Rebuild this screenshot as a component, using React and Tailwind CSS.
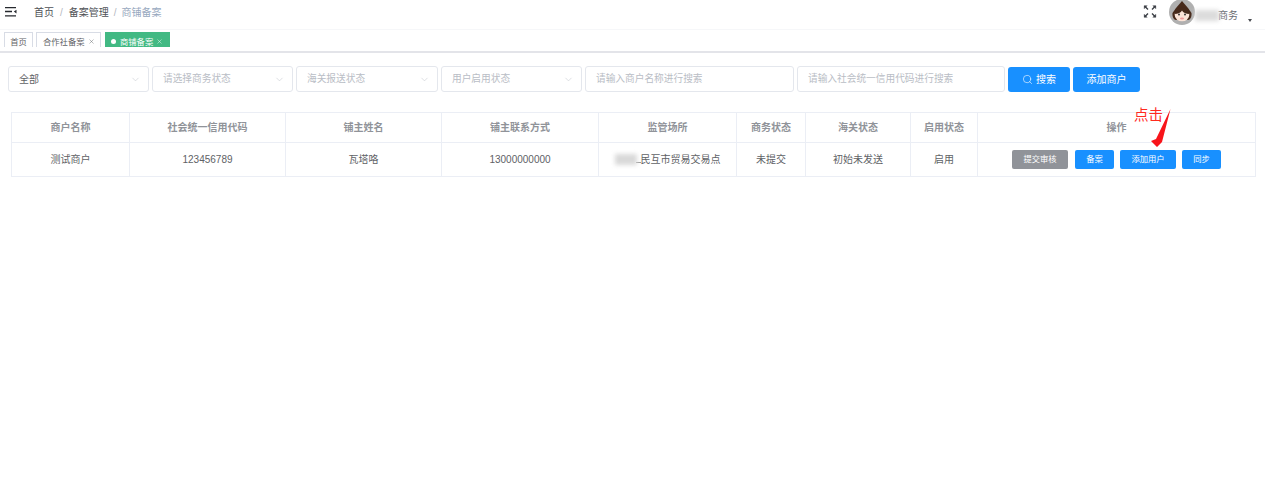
import React from "react";
import { ChevronDown, Search, X } from "lucide-react";

const font = { fontFamily: '"Liberation Sans","Noto Sans CJK SC",sans-serif' };

function Sel({ w, text, ph }) {
  return (
    <div className={`${w} h-[26px] shrink-0 flex items-center justify-between pl-[10px] pr-[7px] rounded-[3px] border border-[#e4e7ed] bg-white`}>
      <span className={ph ? "text-[#b9bdc5] text-[9.7px]" : "text-[#5f6266] text-[10px]"}>{text}</span>
      <ChevronDown size={11} strokeWidth={1.2} className="text-[#c0c4cc]" />
    </div>
  );
}

function Input({ w, text }) {
  return (
    <div className={`${w} h-[26px] shrink-0 flex items-center pl-[10px] rounded-[3px] border border-[#e4e7ed] bg-white text-[#b9bdc5] text-[9.7px]`}>{text}</div>
  );
}

const cols = ["w-[118px]", "w-[156px]", "w-[156px]", "w-[157px]", "w-[138px]", "w-[69px]", "w-[105px]", "w-[67px]", "flex-1"];
const heads = ["商户名称", "社会统一信用代码", "铺主姓名", "铺主联系方式", "监管场所", "商务状态", "海关状态", "启用状态", "操作"];
const cells = ["测试商户", "123456789", "瓦塔咯", "13000000000", null, "未提交", "初始未发送", "启用"];

function Btn({ w, gray, children }) {
  return (
    <span className={`${w} h-[19px] shrink-0 rounded-[2px] flex items-center justify-center text-white text-[8.3px] ${gray ? "bg-[#909399]" : "bg-[#1890ff]"}`}>{children}</span>
  );
}

export default function App() {
  return (
    <div style={font} className="relative w-[1265px] h-[477px] overflow-hidden bg-white">
      {/* top bar */}
      <div className="h-[30px] flex items-center border-b border-[#f6f7f9] relative">
        <svg width="12" height="10" viewBox="0 0 12 10" className="ml-[5px] mb-[5px] shrink-0">
          <path d="M0 .7h11M0 4.500h7M0 8.800h11" stroke="#26292e" strokeWidth="1.300" />
          <path d="M11.500 2.800v3.600L8.800 4.600z" fill="#26292e" />
        </svg>
        <div className="ml-[17px] mb-[5px] flex items-center text-[10px] text-[#4e5156]">
          <span>首页</span>
          <span className="mx-[6px] text-[#b4b8bf]">/</span>
          <span>备案管理</span>
          <span className="mx-[5px] text-[#b4b8bf]">/</span>
          <span className="text-[#97a8be]">商铺备案</span>
        </div>
        <div className="ml-auto flex items-start h-full">
          <svg width="14" height="13" viewBox="0 0 13 13" className="mt-[5px] mr-[12px]">
            <g stroke="#3c4046" strokeWidth="1.400" fill="#3c4046">
              <path d="M1 1l3.500 3.500M12 1L8.500 4.500M1 12l3.500-3.500M12 12L8.500 8.500" />
              <path d="M.7.7h3L.7 3.700zM12.300.7h-3l3 3zM.7 12.300v-3l3 3zM12.300 12.300h-3l3-3z" strokeWidth="0.400" />
            </g>
          </svg>
          <svg width="26" height="26" viewBox="0 0 26 26" className="shrink-0">
            <circle cx="13" cy="12" r="13" fill="#b0b0b0" />
            <path d="M13 1L7 8 3.500 13C3 17 5 20 7 20h12c2 0 4-3 3.500-7L19 8z" fill="#46291a" />
            <ellipse cx="13" cy="15" rx="7.300" ry="6.300" fill="#fbe3d6" />
            <path d="M5.500 14c3.500 0 6.500-1.500 7.500-3.500 1 2 4 3.500 7.500 3.500l-1-5-6.500-2-6.500 2z" fill="#46291a" />
            <circle cx="10" cy="14.500" r="0.900" fill="#222" />
            <circle cx="16" cy="14.500" r="0.900" fill="#222" />
            <ellipse cx="13" cy="18.500" rx="2" ry="1.100" fill="#ef9a9a" />
          </svg>
          <div className="w-[24px] h-[11px] mt-[10px] bg-[#dcdcdc] blur-[2px] shrink-0" />
          <span className="text-[10px] text-[#6a6d72] mt-[8px] w-[21px] -ml-[1px]">商务</span>
          <span className="mt-[19px] ml-[9px] mr-[13px] w-0 h-0 border-x-[2.500px] border-t-[3px] border-x-transparent border-t-[#4a4d52]" />
        </div>
      </div>

      {/* tabs */}
      <div className="h-[23px] border-b-2 border-[#e3e4e9]">
        <div className="h-[17px] overflow-hidden flex items-start pt-[2px] pl-[4px] text-[8.300px]">
          <span className="h-[20px] w-[29px] border border-[#d8dce5] flex justify-center pt-[3px] text-[#5f6266]">首页</span>
          <span className="h-[20px] w-[65px] ml-[3px] border border-[#d8dce5] flex items-start gap-[3px] pt-[3px] pl-[6px] text-[#5f6266]">
            合作社备案
            <X size={7} strokeWidth={1.500} className="mt-[2px]" />
          </span>
          <span className="h-[20px] w-[65px] ml-[4px] bg-[#42b983] flex items-start pt-[4px] pl-[6px] text-white">
            <span className="w-[5px] h-[5px] rounded-full bg-white mt-[3px] mr-[4px]" />
            商铺备案
            <X size={7} strokeWidth={1.500} className="ml-[3px] mt-[2px]" />
          </span>
        </div>
      </div>

      {/* filters */}
      <div className="mt-[13px] ml-[8px] flex items-center gap-[3px]">
        <Sel w="w-[141px]" text="全部" />
        <Sel w="w-[141px]" text="请选择商务状态" ph />
        <Sel w="w-[142px]" text="海关报送状态" ph />
        <Sel w="w-[141px]" text="用户启用状态" ph />
        <Input w="w-[209px]" text="请输入商户名称进行搜索" />
        <Input w="w-[208px]" text="请输入社会统一信用代码进行搜索" />
        <span className="h-[25px] w-[62px] rounded-[3px] bg-[#1890ff] text-white text-[10px] flex items-center justify-center gap-[3px]">
          <Search size={11} strokeWidth={1.300} />搜索
        </span>
        <span className="h-[25px] w-[67px] rounded-[3px] bg-[#1890ff] text-white text-[10px] flex items-center justify-center">添加商户</span>
      </div>

      {/* table */}
      <div className="mt-[20px] ml-[11px] w-[1245px] border border-[#ebeef5] text-[10px]">
        <div className="h-[30px] flex border-b border-[#ebeef5] font-bold text-[#909399]">
          {heads.map((h, i) => (
            <div key={h} className={`${cols[i]} flex items-center justify-center ${i < 8 ? "border-r border-[#ebeef5]" : ""}`}>{h}</div>
          ))}
        </div>
        <div className="h-[33px] flex text-[#606266]">
          {cells.map((c, i) => (
            <div key={i} className={`${cols[i]} flex items-center justify-center border-r border-[#ebeef5]`}>
              {c ?? (
                <span className="flex items-center">
                  <span className="w-[22px] h-[11px] bg-[#d9d9d9] blur-[2px] mr-[-1px]" />
                  <span className="w-[5px] border-b border-[#9a9a9a] h-[7px]" />
                  民互市贸易交易点
                </span>
              )}
            </div>
          ))}
          <div className="flex-1 flex items-center pl-[34px] gap-[6px]">
            <Btn w="w-[56px]" gray>提交审核</Btn>
            <Btn w="w-[39px] ml-[1px]">备案</Btn>
            <Btn w="w-[56px]">添加用户</Btn>
            <Btn w="w-[39px]">同步</Btn>
          </div>
        </div>
      </div>

      {/* annotation */}
      <span className="absolute left-[1134px] top-[105px] text-[14.500px] leading-[20px] text-[#ff2a1f]">点击</span>
      <svg className="absolute left-[1148px] top-[106px]" width="26" height="44" viewBox="0 0 26 44">
        <path d="M22.500 3L14 36 9 41 3 35 8 33z" fill="#f8141a" />
      </svg>
    </div>
  );
}
